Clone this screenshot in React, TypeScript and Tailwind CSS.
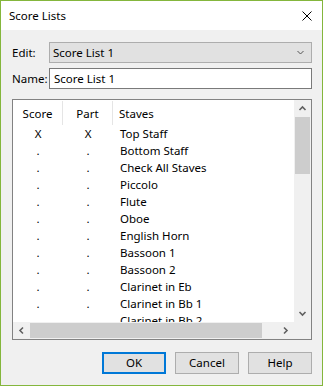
import React from "react";

const rows: [string, string, string][] = [
  ["X", "X", "Top Staff"],
  [".", ".", "Bottom Staff"],
  [".", ".", "Check All Staves"],
  [".", ".", "Piccolo"],
  [".", ".", "Flute"],
  [".", ".", "Oboe"],
  [".", ".", "English Horn"],
  [".", ".", "Bassoon 1"],
  [".", ".", "Bassoon 2"],
  [".", ".", "Clarinet in Eb"],
  [".", ".", "Clarinet in Bb 1"],
  [".", ".", "Clarinet in Bb 2"],
];

const Chevron = ({ dir, color = "#606060", w = 9, h = 9, sw = 1.6 }: { dir: "up" | "down" | "left" | "right"; color?: string; w?: number; h?: number; sw?: number }) => {
  const d =
    dir === "up"
      ? "M1.5 6 L4.5 3 L7.5 6"
      : dir === "down"
      ? "M1.5 3 L4.5 6 L7.5 3"
      : dir === "left"
      ? "M6 1.5 L3 4.5 L6 7.5"
      : "M3 1.5 L6 4.5 L3 7.5";
  return (
    <svg width={w} height={h} viewBox="0 0 9 9">
      <path d={d} fill="none" stroke={color} strokeWidth={sw} />
    </svg>
  );
};

export default function App() {
  return (
    <div
      className="w-[323px] h-[386px] border border-[#84b63c] flex flex-col text-[11.5px] text-[#000] overflow-hidden"
      style={{ fontFamily: '"Noto Sans", "Segoe UI", sans-serif' }}
    >
      <div className="h-[29px] bg-white flex items-center justify-between pl-[8px] pr-[10px] shrink-0">
        <span className="text-[11.5px] leading-none">Score Lists</span>
        <svg width="10" height="10" viewBox="0 0 10 10">
          <path d="M0.5 0.5 L9.5 9.5 M9.5 0.5 L0.5 9.5" stroke="#000" strokeWidth="1" />
        </svg>
      </div>
      <div className="flex-1 bg-[#f0f0f0] pl-[11px] pr-[10px] pt-[12px] flex flex-col">
        <div className="flex items-center h-[21px]">
          <span className="w-[37px] shrink-0 leading-none">Edit:</span>
          <div className="w-[263px] h-[21px] bg-[#e1e1e1] border border-[#adadad] flex items-center justify-between pl-[3px] pr-[6px]">
            <span className="leading-none">Score List 1</span>
            <Chevron dir="down" color="#555" sw={1} />
          </div>
        </div>
        <div className="flex items-center h-[21px] mt-[5px]">
          <span className="w-[37px] shrink-0 leading-none">Name:</span>
          <div className="w-[263px] h-[21px] bg-white border border-[#7a7a7a] flex items-center pl-[4px]">
            <span className="leading-none">Score List 1</span>
          </div>
        </div>
        <div className="mt-[10px] w-[300px] h-[241px] border border-[#828282] bg-white flex flex-col">
          <div className="flex h-[222px]">
            <div className="w-[281px] flex flex-col overflow-hidden">
              <div className="h-[25px] flex items-center shrink-0">
                <div className="w-[50px] h-[24px] mt-[1px] pt-[1px] flex items-center justify-center border-r border-[#e5e5e5]">Score</div>
                <div className="w-[50px] h-[24px] mt-[1px] pt-[1px] flex items-center justify-center border-r border-[#e5e5e5]">Part</div>
                <div className="pl-[6px] pt-[2px]">Staves</div>
              </div>
              {rows.map((r, i) => (
                <div key={i} className="h-[17px] pt-[1px] flex items-center shrink-0">
                  <div className="w-[50px] text-center">{r[0]}</div>
                  <div className="w-[50px] text-center">{r[1]}</div>
                  <div className="pl-[7px] whitespace-nowrap">{r[2]}</div>
                </div>
              ))}
            </div>
            <div className="w-[17px] bg-[#f0f0f0] flex flex-col">
              <div className="h-[17px] flex items-center justify-center">
                <Chevron dir="up" />
              </div>
              <div className="h-[57px] mx-[1px] bg-[#cdcdcd]" />
              <div className="flex-1" />
              <div className="h-[17px] flex items-center justify-center">
                <Chevron dir="down" />
              </div>
            </div>
          </div>
          <div className="flex h-[17px] bg-[#f0f0f0]">
            <div className="w-[17px] flex items-center justify-center">
              <Chevron dir="left" />
            </div>
            <div className="w-[232px] my-[1px] bg-[#cdcdcd]" />
            <div className="flex-1" />
            <div className="w-[17px] flex items-center justify-center">
              <Chevron dir="right" />
            </div>
            <div className="w-[17px]" />
          </div>
        </div>
        <div className="mt-[12px] flex justify-end gap-[9px] w-[300px]">
          <button className="w-[64px] h-[22px] bg-[#e1e1e1] border-2 border-[#0078d7] flex items-center justify-center leading-none">OK</button>
          <button className="w-[64px] h-[22px] bg-[#e1e1e1] border border-[#adadad] flex items-center justify-center leading-none">Cancel</button>
          <button className="w-[64px] h-[22px] bg-[#e1e1e1] border border-[#adadad] flex items-center justify-center leading-none">Help</button>
        </div>
      </div>
    </div>
  );
}
